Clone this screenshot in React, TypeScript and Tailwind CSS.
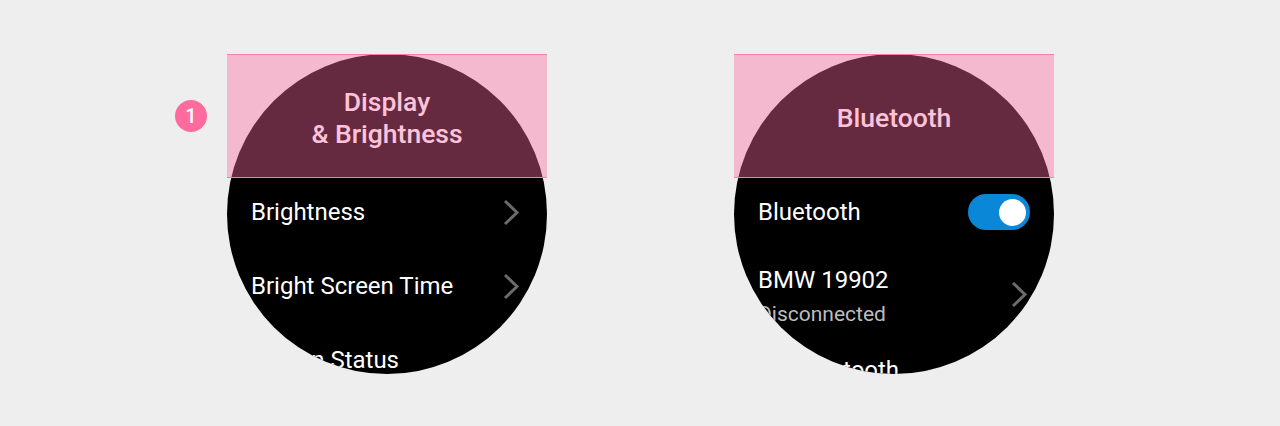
import React from 'react';

const Chevron = () => (
  <svg width="17" height="27" viewBox="0 0 17 27" fill="none">
    <path d="M2 2 L14 13.5 L2 25" stroke="#6b6b6b" strokeWidth="3" />
  </svg>
);

const Toggle = () => (
  <div className="w-[62px] h-[36px] rounded-full bg-[#0b87d8] flex items-center justify-end pr-[4px]">
    <div className="w-[27px] h-[27px] rounded-full bg-white" />
  </div>
);

const Watch = ({ title, children }: { title: React.ReactNode; children: React.ReactNode }) => (
  <div className="relative w-[320px] h-[320px] shrink-0">
    <div className="w-full h-full rounded-full overflow-hidden bg-black">
      <div className="h-[124px] flex items-center justify-center pt-[4px] text-center text-[26.5px] leading-[32px] font-medium text-white">
        {title}
      </div>
      <div className="flex flex-col gap-[6px] text-white text-[24px]">{children}</div>
    </div>
    <div className="absolute top-0 left-0 w-full h-[124px] bg-[rgba(255,105,160,0.4)] border-y border-[#f57fa8]" />
  </div>
);

const Row = ({ label, right }: { label: string; right?: React.ReactNode }) => (
  <div className="h-[68px] flex items-center justify-between pl-[24px] pr-[27px]">
    <span>{label}</span>
    {right}
  </div>
);

export default function App() {
  return (
    <div className="w-full h-[426px] bg-[#eeeeee] flex items-start pt-[54px]" style={{ fontFamily: 'Roboto, "Noto Sans", sans-serif' }}>
      <div className="ml-[175px] mt-[46px] w-[32px] h-[32px] rounded-full bg-[#ff6b9d] flex items-center justify-center text-white text-[20px] font-medium">
        1
      </div>
      <div className="ml-[20px]">
        <Watch title={<span>Display<br />&amp; Brightness</span>}>
          <Row label="Brightness" right={<Chevron />} />
          <Row label="Bright Screen Time" right={<Chevron />} />
          <Row label="Screen Status" />
        </Watch>
      </div>
      <div className="ml-[187px]">
        <Watch title="Bluetooth">
          <Row label="Bluetooth" right={<div className="-mr-[3px]"><Toggle /></div>} />
          <div className="h-[84px] -mb-[6px] flex items-center justify-between pl-[24px] pr-[26px]">
            <div className="flex flex-col pt-[4px]">
              <span className="leading-[36px]">BMW 19902</span>
              <span className="text-[21px] leading-[32px] text-[#bdbdbd]">Disconnected</span>
            </div>
            <Chevron />
          </div>
          <Row label="My Bluetooth" />
        </Watch>
      </div>
    </div>
  );
}
